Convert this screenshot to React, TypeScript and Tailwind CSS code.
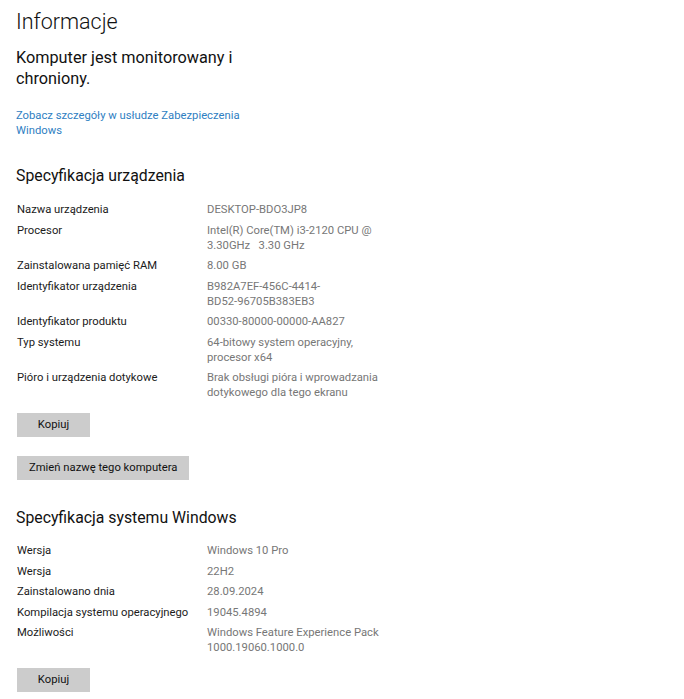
const deviceSpecs: { label: string; value: string[] }[] = [
  { label: "Nazwa urządzenia", value: ["DESKTOP-BDO3JP8"] },
  { label: "Procesor", value: ["Intel(R) Core(TM) i3-2120 CPU @", "3.30GHz   3.30 GHz"] },
  { label: "Zainstalowana pamięć RAM", value: ["8.00 GB"] },
  { label: "Identyfikator urządzenia", value: ["B982A7EF-456C-4414-", "BD52-96705B383EB3"] },
  { label: "Identyfikator produktu", value: ["00330-80000-00000-AA827"] },
  { label: "Typ systemu", value: ["64-bitowy system operacyjny,", "procesor x64"] },
  { label: "Pióro i urządzenia dotykowe", value: ["Brak obsługi pióra i wprowadzania", "dotykowego dla tego ekranu"] },
];

const windowsSpecs: { label: string; value: string[] }[] = [
  { label: "Wersja", value: ["Windows 10 Pro"] },
  { label: "Wersja", value: ["22H2"] },
  { label: "Zainstalowano dnia", value: ["28.09.2024"] },
  { label: "Kompilacja systemu operacyjnego", value: ["19045.4894"] },
  { label: "Możliwości", value: ["Windows Feature Experience Pack", "1000.19060.1000.0"] },
];

function SpecTable({ rows }: { rows: { label: string; value: string[] }[] }) {
  return (
    <div className="flex flex-col gap-[5.5px] pl-px">
      {rows.map((row, i) => (
        <div key={i} className="flex text-[11.25px] leading-[15px]">
          <div className="w-[190px] shrink-0 text-[#1b1b1b]">{row.label}</div>
          <div className="text-[#777777]">
            {row.value.map((line, j) => (
              <div key={j} className="whitespace-pre">
                {line}
              </div>
            ))}
          </div>
        </div>
      ))}
    </div>
  );
}

function GrayButton({ children, className }: { children: React.ReactNode; className?: string }) {
  return (
    <button
      className={`block h-6 min-w-[73px] px-3 ml-px bg-[#cccccc] text-[11.25px] leading-6 text-[#111111] ${className ?? ""}`}
    >
      {children}
    </button>
  );
}

export default function App() {
  return (
    <div
      className="w-[684px] h-[699px] overflow-hidden bg-white pl-4"
      style={{ fontFamily: 'Roboto, "Open Sans", sans-serif' }}
    >
      <h1 className="text-[21.5px] font-light leading-[32px] pt-[6px] text-[#111111]">Informacje</h1>

      <p className="mt-[9px] text-[16.25px] leading-[21px] text-[#111111]">
        Komputer jest monitorowany i
        <br />
        chroniony.
      </p>

      <a className="block mt-[19px] text-[11.25px] leading-[15px] text-[#2f80c2]">
        Zobacz szczegóły w usłudze Zabezpieczenia
        <br />
        Windows
      </a>

      <h2 className="mt-[26px] text-[15.8px] leading-[24px] text-[#111111]">Specyfikacja urządzenia</h2>

      <div className="mt-[14px]">
        <SpecTable rows={deviceSpecs} />
      </div>

      <GrayButton className="mt-[13px]">Kopiuj</GrayButton>
      <GrayButton className="mt-[19px]">Zmień nazwę tego komputera</GrayButton>

      <h2 className="mt-[26px] text-[15.8px] leading-[24px] text-[#111111]">Specyfikacja systemu Windows</h2>

      <div className="mt-[13px]">
        <SpecTable rows={windowsSpecs} />
      </div>

      <GrayButton className="mt-[13px]">Kopiuj</GrayButton>
    </div>
  );
}
